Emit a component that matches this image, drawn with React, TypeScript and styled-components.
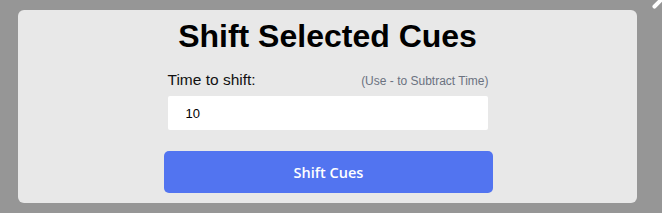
import React, { useState } from 'react';
import styled, { createGlobalStyle } from 'styled-components';

const GlobalStyle = createGlobalStyle`
  html, body {
    margin: 0;
    padding: 0;
    background: #969696;
    font-family: "Liberation Sans", Arial, sans-serif;
  }
`;

const Page = styled.div`
  position: relative;
  width: 662px;
  height: 213px;
  overflow: hidden;
  padding: 10px 25px 0 18px;
  box-sizing: border-box;
`;

const CloseMark = styled.div`
  position: absolute;
  top: -4px;
  right: 2px;
  width: 4px;
  height: 14px;
  background: #fff;
  border-radius: 2px;
  transform: rotate(45deg);
`;

const Panel = styled.div`
  height: 193px;
  box-sizing: border-box;
  background: #e8e8e8;
  border-radius: 6px;
  padding-top: 8px;
  display: flex;
  flex-direction: column;
  align-items: center;
`;

const Title = styled.h1`
  margin: 0;
  font-size: 32px;
  line-height: 37px;
  font-weight: 700;
  color: #000;
`;

const Field = styled.div`
  width: 320px;
  margin-top: 16px;
  display: flex;
  flex-direction: column;
`;

const LabelRow = styled.div`
  display: flex;
  justify-content: space-between;
  align-items: baseline;
  margin-bottom: 7px;
`;

const Label = styled.label`
  font-size: 15.5px;
  color: #111;
`;

const Hint = styled.span`
  font-size: 12px;
  color: #6b7280;
  margin-right: -1px;
`;

const Input = styled.input`
  box-sizing: border-box;
  width: 320px;
  height: 34px;
  border: none;
  border-radius: 2px;
  background: #fff;
  padding: 0 18px;
  font-family: "Liberation Sans", Arial, sans-serif;
  font-size: 13px;
  color: #000;
  outline: none;
  caret-color: #000;
`;

const Button = styled.button`
  margin-top: 21px;
  margin-left: 2px;
  width: 329px;
  height: 42px;
  border: none;
  border-radius: 5px;
  background: #5274f0;
  color: #fff;
  font-family: "Open Sans", "Noto Sans", sans-serif;
  font-weight: 600;
  font-size: 14.5px;
  cursor: pointer;
`;

export default function App() {
  const [value, setValue] = useState('10');
  return (
    <>
      <GlobalStyle />
      <Page>
        <CloseMark />
        <Panel>
          <Title>Shift Selected Cues</Title>
          <Field>
            <LabelRow>
              <Label htmlFor="shift">Time to shift:</Label>
              <Hint>(Use - to Subtract Time)</Hint>
            </LabelRow>
            <Input id="shift" value={value} onChange={e => setValue(e.target.value)} autoFocus />
          </Field>
          <Button>Shift Cues</Button>
        </Panel>
      </Page>
    </>
  );
}
